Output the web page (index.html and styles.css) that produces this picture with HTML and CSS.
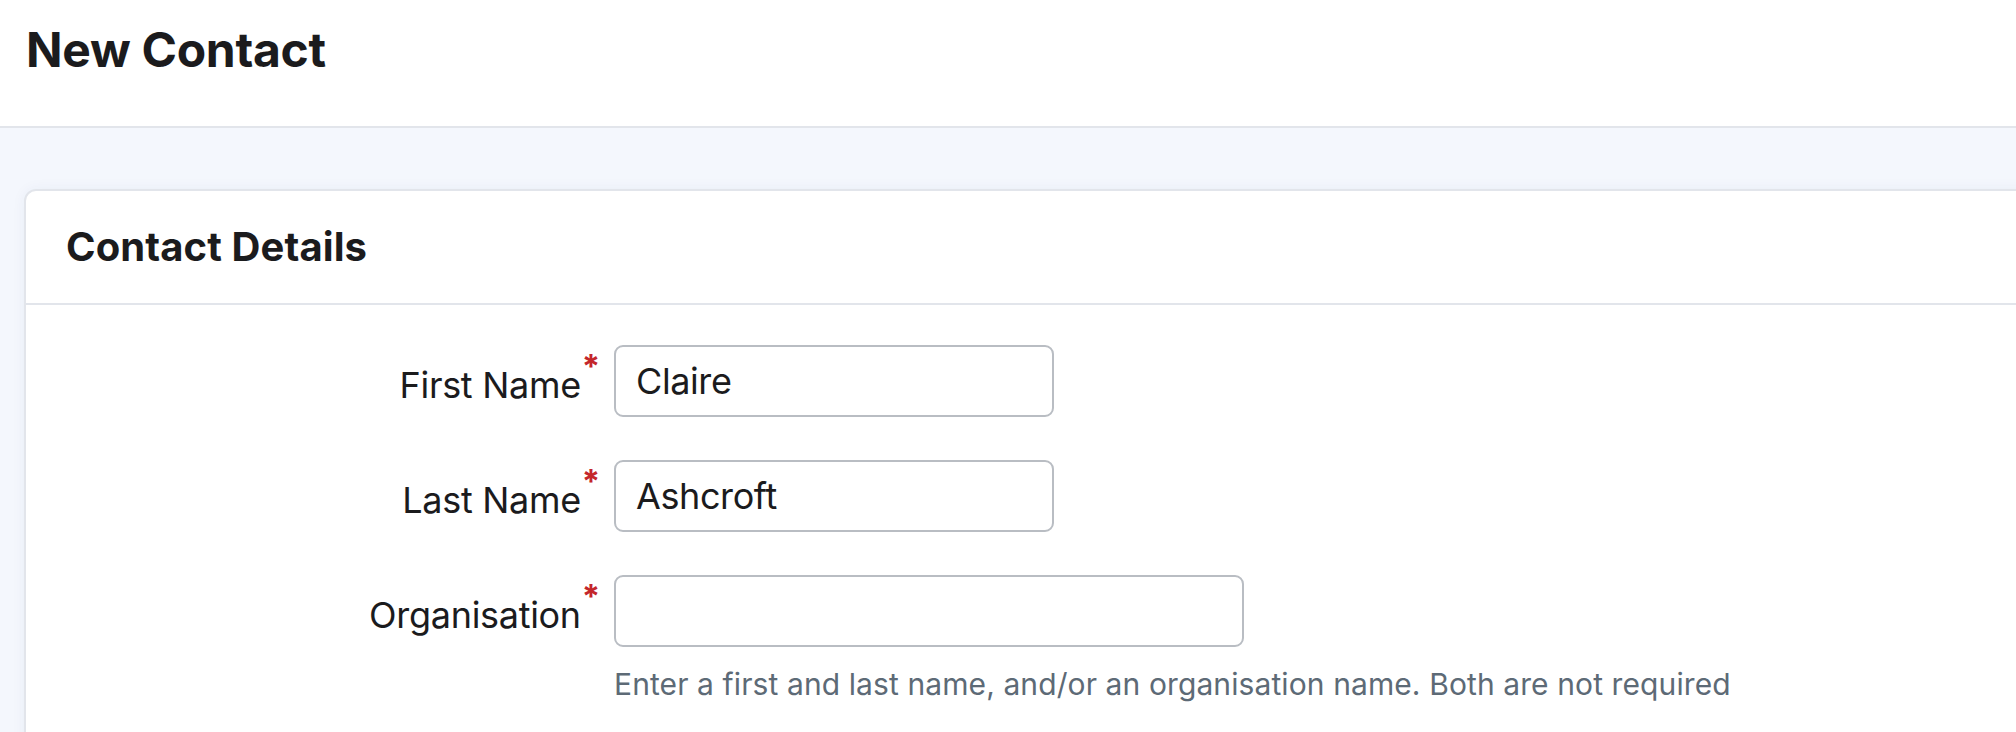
FILE: index.html
```html
<!DOCTYPE html>
<html lang="en">
<head>
<meta charset="utf-8">
<title>New Contact</title>
<link rel="stylesheet" href="styles.css">
</head>
<body>
  <header class="page-header">
    <h1 class="page-title">New Contact</h1>
  </header>
  <main class="page-body">
    <section class="card">
      <div class="card-header">
        <h2 class="card-title">Contact Details</h2>
      </div>
      <form class="card-body">
        <div class="form-row">
          <label class="field-label" for="first">First Name<span class="req">*</span></label>
          <div class="field-control">
            <input class="text-input short" id="first" type="text" value="Claire">
          </div>
        </div>
        <div class="form-row">
          <label class="field-label" for="last">Last Name<span class="req">*</span></label>
          <div class="field-control">
            <input class="text-input short" id="last" type="text" value="Ashcroft">
          </div>
        </div>
        <div class="form-row">
          <label class="field-label" for="org">Organisation<span class="req">*</span></label>
          <div class="field-control">
            <input class="text-input long" id="org" type="text" value="">
            <p class="help-text">Enter a first and last name, and/or an organisation name. Both are not required</p>
          </div>
        </div>
      </form>
    </section>
  </main>
</body>
</html>
```

FILE: styles.css
```css
* {
  box-sizing: border-box;
}

html, body {
  margin: 0;
  padding: 0;
  overflow: hidden;
}

body {
  font-family: Inter, "Liberation Sans", sans-serif;
  color: #1b1b1d;
  background: #f4f7fd;
  height: 732px;
}

.page-header {
  background: #ffffff;
  height: 128px;
  border-bottom: 2px solid #e2e5eb;
  padding: 26px 26px 0;
}

.page-title {
  margin: 0;
  font-size: 48px;
  line-height: 48px;
  font-weight: 700;
  letter-spacing: -0.3px;
  color: #1b1b1d;
}

.page-body {
  padding: 61px 0 0 24px;
}

.card {
  background: #ffffff;
  border: 2px solid #e2e5eb;
  border-radius: 12px;
  margin-right: -40px;
  box-shadow: 0 0 14px rgba(40, 60, 110, 0.05);
  min-height: 700px;
}

.card-header {
  padding: 36px 40px 36px;
  border-bottom: 2px solid #e2e5eb;
}

.card-title {
  margin: 0;
  font-size: 40px;
  line-height: 40px;
  font-weight: 700;
  letter-spacing: 0.1px;
  color: #1b1b1d;
}

.card-body {
  padding-top: 40px;
  display: flex;
  flex-direction: column;
  gap: 43px;
}

.form-row {
  display: grid;
  grid-template-columns: 574px 1fr;
  column-gap: 14px;
  align-items: start;
}

.field-label {
  display: block;
  height: 72px;
  text-align: right;
  font-size: 36px;
  line-height: 72px;
  padding-top: 4px;
  letter-spacing: -0.3px;
  color: #1b1b1d;
  white-space: nowrap;
}

.req {
  color: #c4262b;
  font-size: 33px;
  line-height: 0;
  font-weight: 700;
  vertical-align: 20px;
  margin-left: 1px;
}

.text-input {
  display: block;
  height: 72px;
  border: 2px solid #b9bdc3;
  border-radius: 9px;
  padding: 0 20px;
  font-family: Inter, "Liberation Sans", sans-serif;
  font-size: 36px;
  letter-spacing: -0.4px;
  color: #1b1b1d;
  background: #ffffff;
  outline: none;
}

.text-input.short {
  width: 440px;
}

.text-input.long {
  width: 630px;
}

.help-text {
  margin: 19px 0 0;
  font-size: 30px;
  line-height: 36px;
  color: #5d6a76;
  letter-spacing: 0.1px;
  white-space: nowrap;
}
```
